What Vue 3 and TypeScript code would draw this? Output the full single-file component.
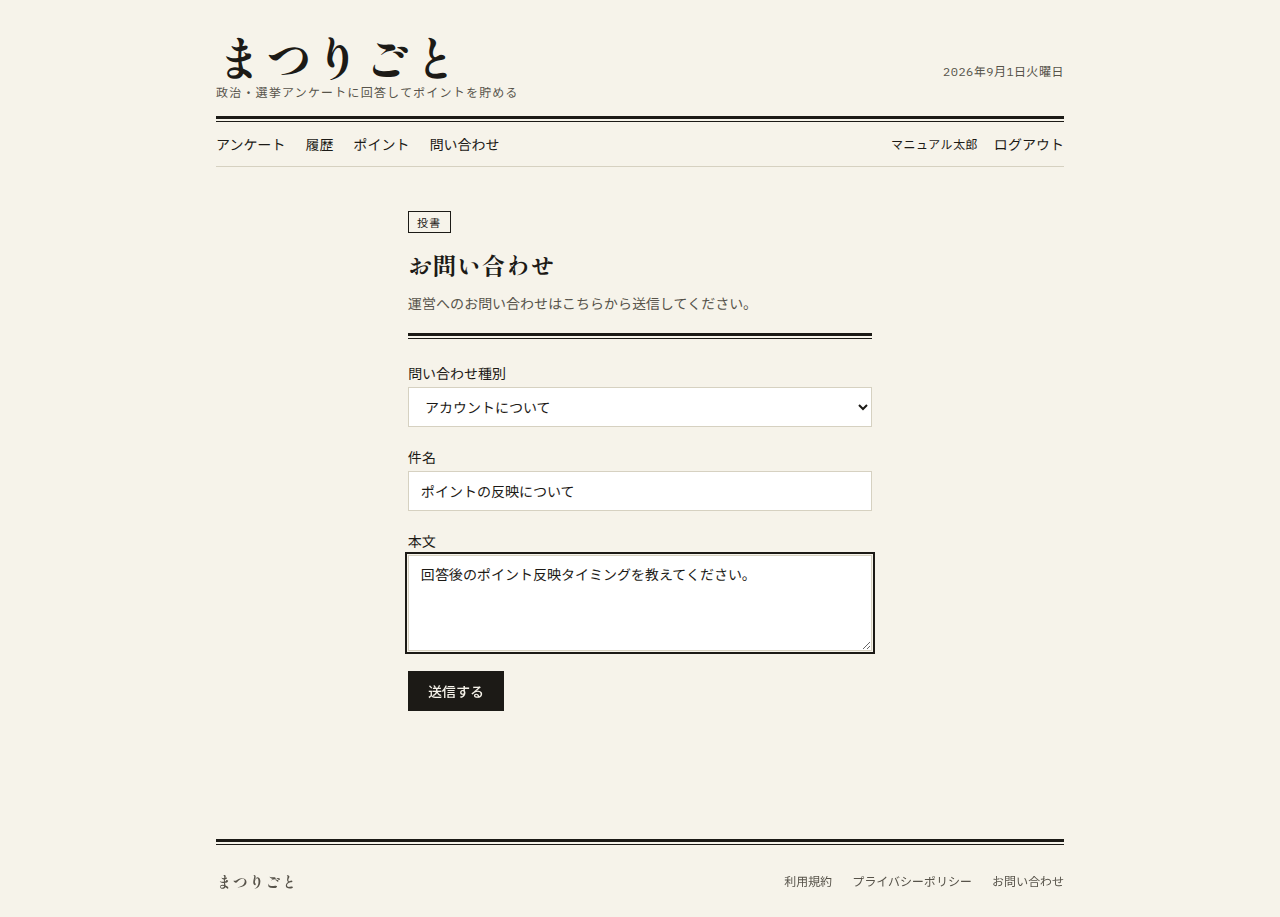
<script setup lang="ts">
import { onMounted, ref } from 'vue'

const mainLinks: string[] = ['アンケート', '履歴', 'ポイント', '問い合わせ']
const footerLinks: string[] = ['利用規約', 'プライバシーポリシー', 'お問い合わせ']
const categories: string[] = ['アカウントについて', 'ポイントについて', 'アンケートについて', 'その他']

const category = ref<string>(categories[0])
const subject = ref<string>('ポイントの反映について')
const message = ref<string>('回答後のポイント反映タイミングを教えてください。')
const messageBox = ref<HTMLTextAreaElement | null>(null)

onMounted(() => messageBox.value?.focus())
</script>

<template>
  <div class="page">
    <header>
      <div class="masthead">
        <div>
          <a class="brand" href="#">まつりごと</a>
          <p class="tagline">政治・選挙アンケートに回答してポイントを貯める</p>
        </div>
        <time class="date" datetime="2026-09-01">2026年9月1日火曜日</time>
      </div>
      <nav class="nav">
        <div class="links">
          <a v-for="link in mainLinks" :key="link" href="#">{{ link }}</a>
        </div>
        <div class="account">
          <span class="user">マニュアル太郎</span>
          <button class="logout" type="button">ログアウト</button>
        </div>
      </nav>
    </header>

    <main>
      <span class="badge">投書</span>
      <h1>お問い合わせ</h1>
      <p class="lead">運営へのお問い合わせはこちらから送信してください。</p>
      <div class="rule"></div>
      <form @submit.prevent>
        <div class="field">
          <label for="category">問い合わせ種別</label>
          <select id="category" v-model="category">
            <option v-for="item in categories" :key="item">{{ item }}</option>
          </select>
        </div>
        <div class="field">
          <label for="subject">件名</label>
          <input id="subject" v-model="subject" type="text" />
        </div>
        <div class="field">
          <label for="message">本文</label>
          <textarea id="message" ref="messageBox" v-model="message"></textarea>
        </div>
        <button class="submit" type="submit">送信する</button>
      </form>
    </main>

    <footer>
      <div class="rule"></div>
      <div class="footer-row">
        <span class="footer-brand">まつりごと</span>
        <nav class="footer-links">
          <a v-for="link in footerLinks" :key="link" href="#">{{ link }}</a>
        </nav>
      </div>
    </footer>
  </div>
</template>

<style>
body {
  background: #f6f3ea;
}
</style>

<style scoped>
.page {
  box-sizing: border-box;
  display: flex;
  flex-direction: column;
  max-width: 880px;
  min-height: 100vh;
  margin: 0 auto;
  padding: 0 16px;
  color: #1c1a16;
  font: 14px/20px "Noto Sans JP", "Noto Sans CJK JP", sans-serif;
}

a {
  color: inherit;
  text-decoration: none;
}

.masthead {
  display: flex;
  align-items: flex-end;
  justify-content: space-between;
  margin-bottom: 2px;
  padding: 32px 0 16px;
  border-bottom: 3px solid #1c1a16;
}

.brand {
  display: block;
  font: 700 48px/48px "Shippori Mincho", "Noto Serif CJK JP", serif;
  letter-spacing: 0.02em;
}

.tagline {
  margin: 4px 0 0;
  color: #57534a;
  font-size: 12px;
  line-height: 16px;
  letter-spacing: 0.1em;
}

.date {
  margin-bottom: 20px;
  color: #57534a;
  font: 12px/16px "IBM Plex Mono", "Liberation Mono", "Noto Sans JP", "Noto Sans CJK JP", monospace;
  letter-spacing: 0.04em;
}

.nav {
  display: flex;
  align-items: center;
  justify-content: space-between;
  padding: 12px 0;
  border-top: 1px solid #1c1a16;
  border-bottom: 1px solid #d6d1c1;
}

.links,
.footer-links {
  display: flex;
  gap: 20px;
}

.account {
  display: flex;
  align-items: center;
  gap: 16px;
}

.user {
  font-size: 12px;
  letter-spacing: 0.04em;
}

.logout {
  padding: 0;
  border: 0;
  background: none;
  color: inherit;
  font: inherit;
}

main {
  box-sizing: border-box;
  flex: 1;
  width: 100%;
  max-width: 464px;
  margin: 0 auto;
  padding: 44px 0 32px;
}

.badge {
  display: block;
  width: fit-content;
  padding: 2px 8px;
  border: 1px solid #1c1a16;
  font-size: 11px;
  line-height: 16px;
  letter-spacing: 0.12em;
}

h1 {
  margin: 16px 0 12px;
  font: 700 24px/32px "Shippori Mincho", "Noto Serif CJK JP", serif;
  letter-spacing: 0.02em;
}

.lead {
  margin: 0 0 20px;
  color: #57534a;
}

.rule {
  height: 2px;
  border-top: 3px solid #1c1a16;
  border-bottom: 1px solid #1c1a16;
}

form {
  margin-top: 24px;
}

.field {
  margin-bottom: 20px;
}

label {
  display: block;
  margin-bottom: 4px;
}

select,
input,
textarea {
  box-sizing: border-box;
  display: block;
  width: 100%;
  height: 40px;
  padding: 8px 12px;
  border: 1px solid #d6d1c1;
  border-radius: 0;
  background: #fff;
  color: inherit;
  font: inherit;
}

textarea {
  height: 96px;
}

select:focus,
input:focus,
textarea:focus {
  outline: 2px solid #1c1a16;
  outline-offset: 1px;
}

.submit {
  height: 40px;
  padding: 0 20px;
  border: 0;
  background: #1c1a16;
  color: #f6f3ea;
  font: inherit;
  font-weight: 500;
}

.footer-row {
  display: flex;
  align-items: center;
  justify-content: space-between;
  padding: 24px 0;
  color: #57534a;
  font-size: 12px;
}

.footer-brand {
  font: 700 16px/24px "Shippori Mincho", "Noto Serif CJK JP", serif;
  letter-spacing: 0.02em;
}
</style>
